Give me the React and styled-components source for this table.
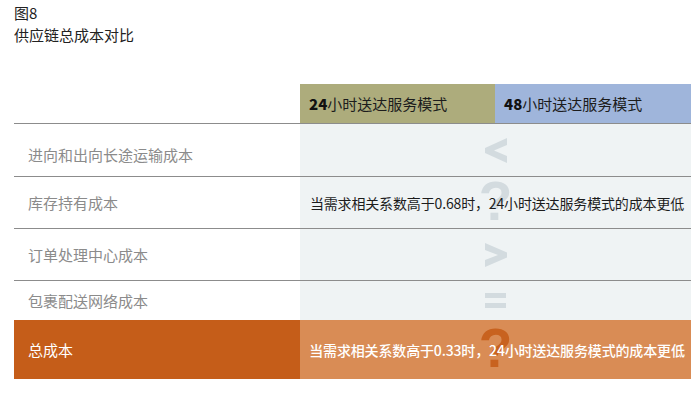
import React from "react";
import styled, { createGlobalStyle } from "styled-components";

const GlobalStyle = createGlobalStyle`
  html, body { margin: 0; padding: 0; background: #ffffff; }
  body { font-family: "Noto Sans CJK SC", "Noto Sans", sans-serif; }
`;

const Page = styled.div`
  width: 698px;
  height: 397px;
  box-sizing: border-box;
  padding: 2px 7px 0 14px;
`;

const Title = styled.div`
  font-size: 15px;
  line-height: 22px;
  color: #222;
`;

const Table = styled.div`
  margin-top: 38px;
  width: 677px;
  display: flex;
  flex-direction: column;
`;

const HeaderRow = styled.div`
  display: grid;
  grid-template-columns: 286px 195px 196px;
  height: 39px;
  border-bottom: 1px solid #8c8c8c;
`;

const HeaderCell = styled.div`
  background: ${(p) => p.$bg || "transparent"};
  display: flex;
  align-items: center;
  padding-left: 9px;
  font-size: 15px;
  color: #1c1c1c;
  b { font-weight: 800; color: #111; }
`;

const Row = styled.div`
  display: grid;
  grid-template-columns: 286px 391px;
  height: ${(p) => p.$h}px;
  border-bottom: ${(p) => (p.$line ? "1px solid #8c8c8c" : "none")};
`;

const Label = styled.div`
  display: flex;
  align-items: center;
  padding-left: 14px;
  padding-top: ${(p) => p.$offset || 0}px;
  font-size: 15px;
  color: ${(p) => (p.$total ? "#ffffff" : "#8b8b8b")};
  background: ${(p) => (p.$total ? "#c55d19" : "transparent")};
`;

const Value = styled.div`
  position: relative;
  display: flex;
  align-items: center;
  justify-content: center;
  background: ${(p) => (p.$total ? "#d98c55" : "#eff3f4")};
`;

const Mark = styled.span`
  position: absolute;
  left: 50%;
  top: 50%;
  transform: translate(-50%, -56%);
  font-family: "Liberation Sans", Arial, sans-serif;
  font-weight: 700;
  font-size: 55px;
  line-height: 40px;
  height: 40px;
  color: ${(p) => p.$color};
`;

const Note = styled.span`
  position: relative;
  z-index: 1;
  font-size: 14px;
  letter-spacing: -0.15px;
  white-space: nowrap;
  color: ${(p) => (p.$light ? "#ffffff" : "#1c1c1c")};
  font-weight: ${(p) => (p.$light ? 500 : 400)};
  padding-left: 3px;
`;

const SYM = "#d3dbdf";

const LessThan = () => (
  <svg width="22" height="25" viewBox="0 0 22 25">
    <polygon points="22,0 22,7 9,12.5 22,18 22,25 0,15 0,10" fill={SYM} />
  </svg>
);

const GreaterThan = () => (
  <svg width="22" height="24" viewBox="0 0 22 24">
    <polygon points="0,0 0,7 13,12 0,17 0,24 22,14.5 22,9.5" fill={SYM} />
  </svg>
);

const Equals = () => (
  <svg width="21" height="15" viewBox="0 0 21 15">
    <rect x="0" y="0" width="21" height="5" fill={SYM} />
    <rect x="0" y="10" width="21" height="5" fill={SYM} />
  </svg>
);

export default function App() {
  return (
    <>
      <GlobalStyle />
      <Page>
        <Title>图8</Title>
        <Title>供应链总成本对比</Title>
        <Table>
          <HeaderRow>
            <HeaderCell />
            <HeaderCell $bg="#adac7c">
              <b>24</b>小时送达服务模式
            </HeaderCell>
            <HeaderCell $bg="#9fb5db">
              <b>48</b>小时送达服务模式
            </HeaderCell>
          </HeaderRow>
          <Row $h={52} $line>
            <Label $offset={8}>进向和出向长途运输成本</Label>
            <Value>
              <LessThan />
            </Value>
          </Row>
          <Row $h={51} $line>
            <Label>库存持有成本</Label>
            <Value>
              <Mark $color={SYM}>?</Mark>
              <Note>当需求相关系数高于0.68时，24小时送达服务模式的成本更低</Note>
            </Value>
          </Row>
          <Row $h={51} $line>
            <Label>订单处理中心成本</Label>
            <Value>
              <GreaterThan />
            </Value>
          </Row>
          <Row $h={39}>
            <Label>包裹配送网络成本</Label>
            <Value>
              <Equals />
            </Value>
          </Row>
          <Row $h={59}>
            <Label $total>总成本</Label>
            <Value $total>
              <Mark $color="#c8621f">?</Mark>
              <Note $light>当需求相关系数高于0.33时，24小时送达服务模式的成本更低</Note>
            </Value>
          </Row>
        </Table>
      </Page>
    </>
  );
}
